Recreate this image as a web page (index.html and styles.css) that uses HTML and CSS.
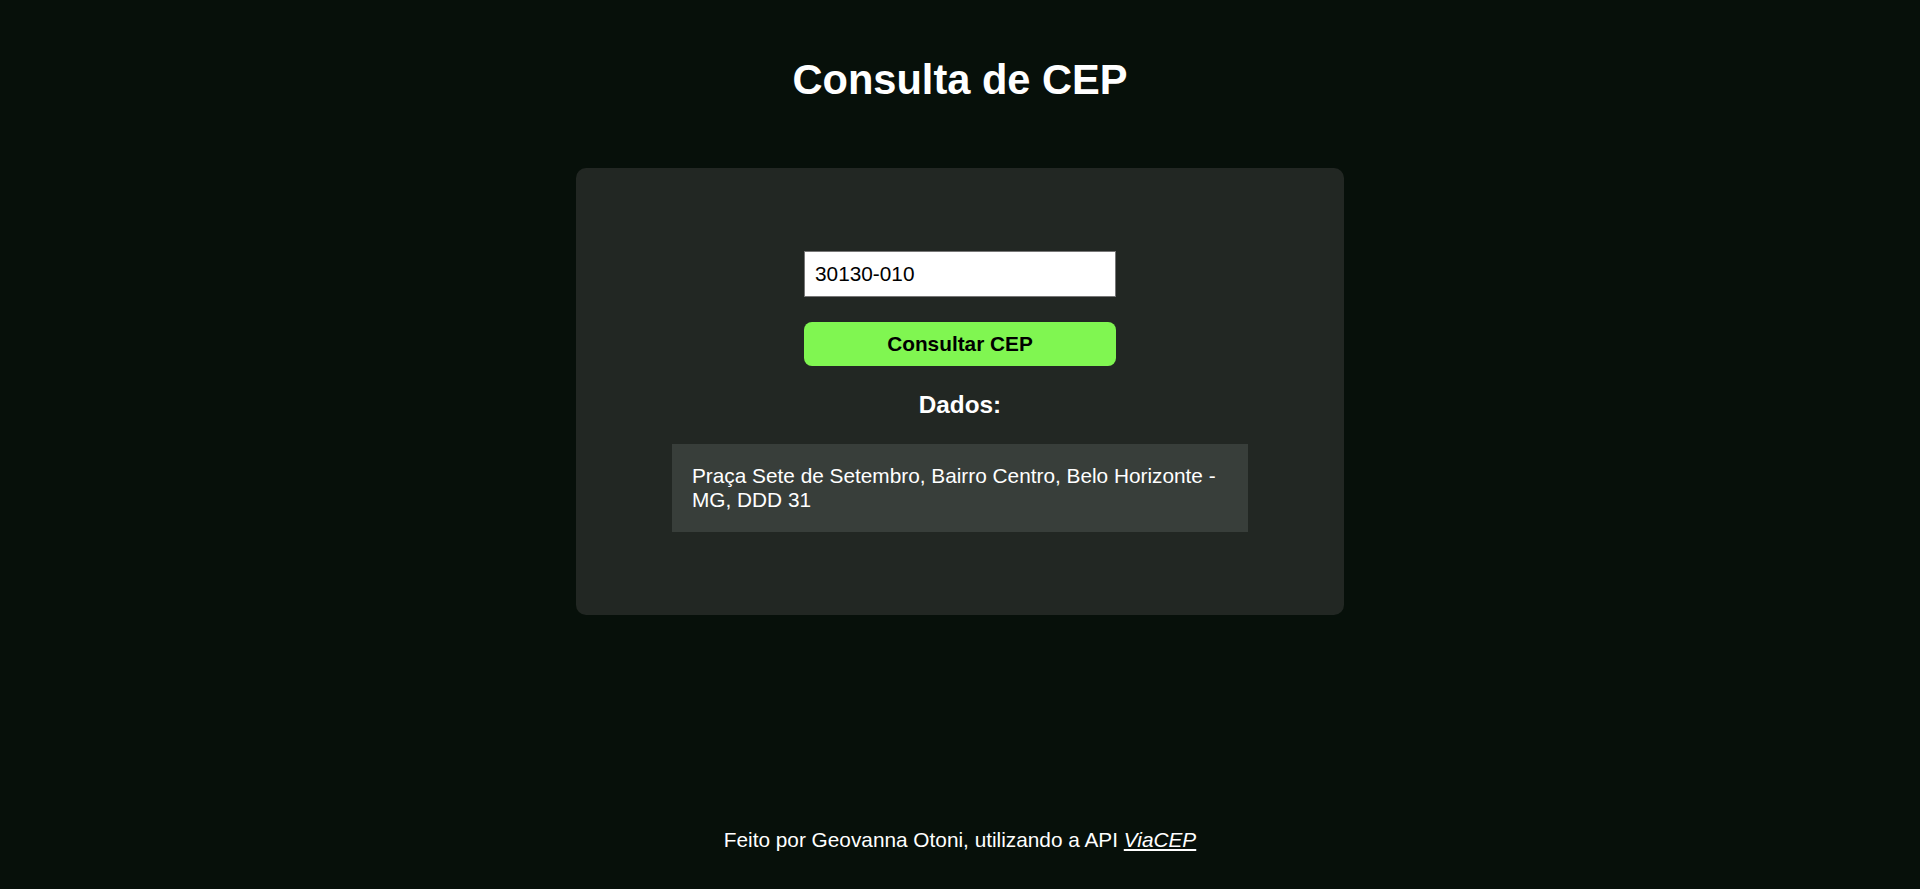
FILE: index.html
```html
<!DOCTYPE html>
<html lang="pt-BR">
<head>
<meta charset="utf-8">
<title>Consulta de CEP</title>
<link rel="stylesheet" href="styles.css">
</head>
<body>
<div class="page">
  <h1 class="title">Consulta de CEP</h1>
  <main class="card">
    <input class="cep-input" type="text" value="30130-010">
    <button class="cep-button" type="button">Consultar CEP</button>
    <h3 class="dados-title">Dados:</h3>
    <div class="result">Praça Sete de Setembro, Bairro Centro, Belo Horizonte - MG, DDD 31</div>
  </main>
  <footer class="footer">Feito por Geovanna Otoni, utilizando a API <a class="footer-link" href="#">ViaCEP</a></footer>
</div>
</body>
</html>
```

FILE: styles.css
```css
html, body {
  margin: 0;
  padding: 0;
}

body {
  background: #07100a;
  color: #ffffff;
  font-family: "Liberation Sans", Arial, sans-serif;
  font-size: 20.8px;
}

.page {
  min-height: 100vh;
  display: flex;
  flex-direction: column;
  align-items: center;
  box-sizing: border-box;
}

.title {
  margin: 56px 0 0;
  font-size: 41.6px;
  line-height: 47px;
  font-weight: bold;
}

.card {
  margin-top: 65px;
  width: 768px;
  box-sizing: border-box;
  padding: 83px 0;
  background: #222723;
  border-radius: 10px;
  display: flex;
  flex-direction: column;
  align-items: center;
}

.cep-input {
  width: 312px;
  height: 46px;
  box-sizing: border-box;
  border: 1px solid #767676;
  border-radius: 0;
  padding: 0 10px;
  margin: 0;
  background: #ffffff;
  color: #000000;
  font-family: "Liberation Sans", Arial, sans-serif;
  font-size: 20.8px;
  outline: none;
}

.cep-button {
  margin-top: 25px;
  width: 312px;
  height: 44px;
  border: none;
  border-radius: 8px;
  background: #80f651;
  color: #000000;
  font-family: "Liberation Sans", Arial, sans-serif;
  font-size: 20.8px;
  font-weight: bold;
  padding: 0;
}

.dados-title {
  margin: 25px 0 0;
  font-size: 24.3px;
  line-height: 28px;
  font-weight: bold;
}

.result {
  margin-top: 25px;
  width: 576px;
  box-sizing: border-box;
  padding: 20px;
  background: #383e3a;
  font-size: 20.8px;
  line-height: 24px;
}

.footer {
  margin-top: auto;
  margin-bottom: 37px;
  font-size: 20.8px;
  line-height: 24px;
}

.footer-link {
  color: #ffffff;
  font-style: italic;
  text-decoration: underline;
}
```
